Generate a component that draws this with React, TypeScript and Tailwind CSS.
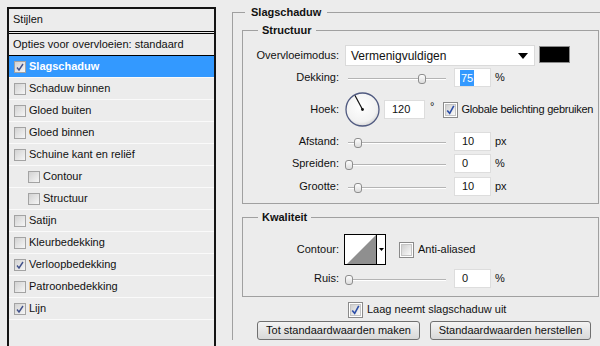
import React from 'react';

const items = [
  { label: 'Slagschaduw', checked: true, selected: true },
  { label: 'Schaduw binnen' },
  { label: 'Gloed buiten' },
  { label: 'Gloed binnen' },
  { label: 'Schuine kant en reliëf' },
  { label: 'Contour', indent: true },
  { label: 'Structuur', indent: true },
  { label: 'Satijn' },
  { label: 'Kleurbedekking' },
  { label: 'Verloopbedekking', checked: true },
  { label: 'Patroonbedekking' },
  { label: 'Lijn', checked: true },
];

const SmallCheck = ({ checked }: { checked?: boolean }) => (
  <div className="w-[12px] h-[12px] shrink-0 border border-[#a3a3a3] bg-linear-to-br from-[#d2d2d2] to-[#f6f6f6] flex items-center justify-center">
    {checked && (
      <svg width="10" height="10" viewBox="0 0 10 10">
        <path d="M2 5.5 L4 8 L8 2" fill="none" stroke="#41518a" strokeWidth="1.4" />
      </svg>
    )}
  </div>
);

const BigCheck = ({ checked }: { checked?: boolean }) => (
  <div className="w-[15px] h-[16px] shrink-0 border border-[#8a8a8a] p-[1px] bg-white">
    <div className="w-full h-full border border-[#c4c4c4] bg-linear-to-br from-[#cfcfcf] to-[#fafafa] flex items-center justify-center">
      {checked && (
        <svg width="11" height="12" viewBox="0 0 11 12">
          <path d="M1.5 6.5 L4.5 10 L9.5 1" fill="none" stroke="#2d4fa8" strokeWidth="2" />
        </svg>
      )}
    </div>
  </div>
);

const Slider = ({ thumb }: { thumb: number }) => (
  <div className="relative w-[101px] h-[19px] ml-[6px] shrink-0">
    <div className="absolute left-[3px] right-0 top-[10px] h-[2px] border-t border-[#b4b4b4] border-b border-b-white" />
    <div
      className="absolute top-[6px] w-[8px] h-[10px] rounded-[3px] border border-[#8d8d8d] bg-linear-to-b from-[#fdfdfd] to-[#dcdcdc]"
      style={{ left: thumb }}
    />
  </div>
);

const NumBox = ({ value, selected, w = 37 }: { value: string; selected?: boolean; w?: number }) => (
  <div
    className="h-[19px] bg-white border border-[#dddddd] flex items-center pl-[5px] text-[11px] shrink-0"
    style={{ width: w }}
  >
    {selected ? <span className="bg-[#3399ff] text-white px-[1px] leading-[16px]">{value}</span> : <span className="pl-[2px]">{value}</span>}
  </div>
);

const Label = ({ children }: { children: React.ReactNode }) => (
  <div className="w-[96px] text-right shrink-0 whitespace-nowrap">{children}</div>
);

const SliderRow = ({ label, thumb, value, unit, selected, cls }: { label: string; thumb: number; value: string; unit: string; selected?: boolean; cls: string }) => (
  <div className={`flex items-center h-[19px] ${cls}`}>
    <Label>{label}</Label>
    <Slider thumb={thumb} />
    <div className="ml-[8px]">
      <NumBox value={value} selected={selected} />
    </div>
    <span className="ml-[4px]">{unit}</span>
  </div>
);

const Dial = () => (
  <svg width="35" height="35" viewBox="0 0 35 35" className="ml-[6px] shrink-0">
    <defs>
      <radialGradient id="dialg" cx="45%" cy="40%" r="60%">
        <stop offset="0%" stopColor="#ffffff" />
        <stop offset="80%" stopColor="#f2f2f2" />
        <stop offset="100%" stopColor="#d8d8d8" />
      </radialGradient>
    </defs>
    <circle cx="17.5" cy="17.5" r="16.5" fill="url(#dialg)" stroke="#505a80" strokeWidth="1.3" />
    <line x1="17.5" y1="17.5" x2="10" y2="3.5" stroke="#111" strokeWidth="1.2" />
    <circle cx="17.5" cy="17.5" r="1.4" fill="#111" />
  </svg>
);

export default function App() {
  return (
    <div className="w-[600px] h-[346px] bg-[#ececec] flex overflow-hidden text-[11px] text-[#111] whitespace-nowrap font-['Liberation_Sans',Arial,sans-serif]">
      {/* left: styles list */}
      <div className="mt-[7px] ml-[7px] w-[209px] self-stretch border-2 border-b-0 border-[#141414] flex flex-col shrink-0">
        <div className="h-[23px] border-b border-black flex items-center pl-[4px] pb-[2px]">Stijlen</div>
        <div className="h-[1px]" />
        <div className="h-[23px] border-y border-black flex items-center pl-[4px]">Opties voor overvloeien: standaard</div>
        {items.map(it => (
          <div
            key={it.label}
            className={`h-[22px] border-b border-[#fafafa] flex items-center gap-[3px] ${it.indent ? 'pl-[19px]' : 'pl-[5px]'} ${it.selected ? 'bg-[#3399ff] text-white font-bold' : ''}`}
          >
            <SmallCheck checked={it.checked} />
            <span>{it.label}</span>
          </div>
        ))}
      </div>

      {/* right: settings */}
      <div className="flex-1 pl-[16px] min-w-0">
        <fieldset className="mt-[4px] border-l border-t border-[#a0a0a0] pl-[9px] pr-[1px] min-w-0">
          <legend className="ml-[3px] px-[6px] font-bold leading-[16px]">Slagschaduw</legend>

          <fieldset className="mt-[2px] border border-[#a0a0a0] pb-[7px] min-w-0">
            <legend className="ml-[15px] px-[4px] font-bold leading-[16px]">Structuur</legend>

            <div className="flex items-center h-[21px] mt-[7px]">
              <Label>Overvloeimodus:</Label>
              <div className="ml-[6px] w-[190px] h-[21px] bg-white border border-[#dadada] flex items-center justify-between pl-[5px] pr-[6px] text-[12px]">
                <span>Vermenigvuldigen</span>
                <svg width="10" height="6" viewBox="0 0 10 6">
                  <path d="M0 0 H10 L5 6 Z" fill="#000" />
                </svg>
              </div>
              <div className="ml-[4px] w-[31px] h-[17px] self-start mt-[1px] bg-black border border-[#8a8a8a]" />
            </div>

            <SliderRow label="Dekking:" thumb={73} value="75" unit="%" selected cls="mt-[2px]" />

            <div className="flex items-center h-[35px] mt-[5px]">
              <Label>Hoek:</Label>
              <Dial />
              <div className="ml-[4px]">
                <NumBox value="120" w={41} />
              </div>
              <span className="ml-[5px] self-start mt-[6px]">°</span>
              <div className="ml-[9px]">
                <BigCheck checked />
              </div>
              <span className="ml-[3px] tracking-[-0.25px]">Globale belichting gebruiken</span>
            </div>

            <SliderRow label="Afstand:" thumb={9} value="10" unit="px" cls="mt-[5px]" />
            <SliderRow label="Spreiden:" thumb={0} value="0" unit="%" cls="mt-[3px]" />
            <SliderRow label="Grootte:" thumb={9} value="10" unit="px" cls="mt-[4px]" />
          </fieldset>

          <fieldset className="mt-[5px] border border-[#a0a0a0] pb-[8px] min-w-0">
            <legend className="ml-[15px] px-[4px] font-bold leading-[16px]">Kwaliteit</legend>

            <div className="flex items-center h-[31px] mt-[9px]">
              <Label>Contour:</Label>
              <div className="ml-[5px] w-[42px] h-[31px] border border-black flex bg-white">
                <svg width="31" height="29" viewBox="0 0 31 29" className="shrink-0">
                  <path d="M2 29 L31 0 L31 29 Z" fill="#8f8f8f" />
                </svg>
                <div className="flex-1 border-l border-black flex items-center justify-center">
                  <svg width="5" height="3" viewBox="0 0 5 3">
                    <path d="M0 0 H5 L2.5 3 Z" fill="#000" />
                  </svg>
                </div>
              </div>
              <div className="ml-[13px]">
                <BigCheck />
              </div>
              <span className="ml-[4px]">Anti-aliased</span>
            </div>

            <SliderRow label="Ruis:" thumb={0} value="0" unit="%" cls="mt-[4px]" />
          </fieldset>

          <div className="flex items-center h-[17px] mt-[4px] pl-[106px]">
            <BigCheck checked />
            <span className="ml-[4px]">Laag neemt slagschaduw uit</span>
          </div>

          <div className="flex gap-[10px] mt-[3px] pl-[15px]">
            <button className="w-[163px] h-[19px] border border-[#707070] rounded-[3px] bg-linear-to-b from-[#f4f4f4] to-[#d8d8d8] text-[11px] text-[#111]">
              Tot standaardwaarden maken
            </button>
            <button className="w-[161px] h-[19px] border border-[#707070] rounded-[3px] bg-linear-to-b from-[#f4f4f4] to-[#d8d8d8] text-[11px] text-[#111]">
              Standaardwaarden herstellen
            </button>
          </div>
        </fieldset>
      </div>
    </div>
  );
}
